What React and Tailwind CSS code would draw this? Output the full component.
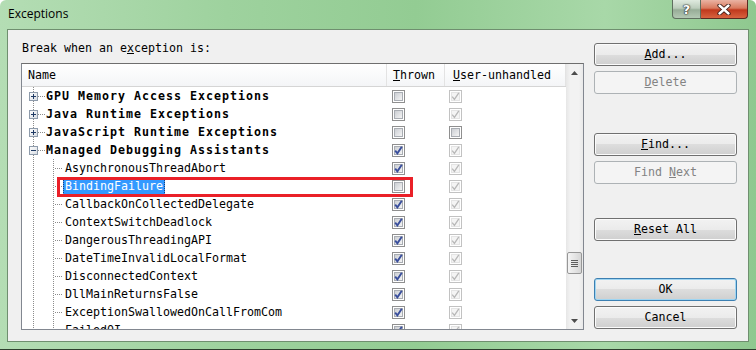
import React from "react";

const mono = "font-['DejaVu_Sans_Mono',monospace] text-[11.63px]";

const rows = [
  { name: "GPU Memory Access Exceptions", level: 0, box: "plus", thrown: "off", user: "dis" },
  { name: "Java Runtime Exceptions", level: 0, box: "plus", thrown: "off", user: "dis" },
  { name: "JavaScript Runtime Exceptions", level: 0, box: "plus", thrown: "off", user: "off" },
  { name: "Managed Debugging Assistants", level: 0, box: "minus", thrown: "on", user: "dis" },
  { name: "AsynchronousThreadAbort", level: 1, thrown: "on", user: "dis" },
  { name: "BindingFailure", level: 1, thrown: "off", user: "dis", selected: true },
  { name: "CallbackOnCollectedDelegate", level: 1, thrown: "on", user: "dis" },
  { name: "ContextSwitchDeadlock", level: 1, thrown: "on", user: "dis" },
  { name: "DangerousThreadingAPI", level: 1, thrown: "on", user: "dis" },
  { name: "DateTimeInvalidLocalFormat", level: 1, thrown: "on", user: "dis" },
  { name: "DisconnectedContext", level: 1, thrown: "on", user: "dis" },
  { name: "DllMainReturnsFalse", level: 1, thrown: "on", user: "dis" },
  { name: "ExceptionSwallowedOnCallFromCom", level: 1, thrown: "on", user: "dis" },
  { name: "FailedQI", level: 1, thrown: "on", user: "dis" },
];

function Defs() {
  return (
    <svg width="0" height="0" className="absolute">
      <defs>
        <linearGradient id="tvbox" x1="0" y1="0" x2="1" y2="1">
          <stop offset="0" stopColor="#ffffff" />
          <stop offset="1" stopColor="#d6dbe2" />
        </linearGradient>
        <linearGradient id="cbfill" x1="0" y1="0" x2="1" y2="1">
          <stop offset="0" stopColor="#c9ccd1" />
          <stop offset="1" stopColor="#f7f7f7" />
        </linearGradient>
      </defs>
    </svg>
  );
}

function Gutter({ level, box }) {
  const dot = "#8c8c8c";
  if (level === 0) {
    return (
      <svg width="24" height="18" className="shrink-0" shapeRendering="crispEdges">
        <line x1="11.5" y1="0" x2="11.5" y2="18" stroke={dot} strokeDasharray="1 1" />
        <line x1="16" y1="9.5" x2="23" y2="9.5" stroke={dot} strokeDasharray="1 1" />
        <rect x="7.5" y="5.5" width="8" height="8" fill="url(#tvbox)" stroke="#8e9bab" />
        <line x1="9" y1="9.5" x2="14" y2="9.5" stroke="#1f3a64" />
        {box === "plus" && <line x1="11.5" y1="7" x2="11.5" y2="12" stroke="#1f3a64" />}
      </svg>
    );
  }
  return (
    <svg width="43" height="18" className="shrink-0" shapeRendering="crispEdges">
      <line x1="11.5" y1="0" x2="11.5" y2="18" stroke={dot} strokeDasharray="1 1" />
      <line x1="31.5" y1="0" x2="31.5" y2="18" stroke={dot} strokeDasharray="1 1" />
      <line x1="33" y1="9.5" x2="41" y2="9.5" stroke={dot} strokeDasharray="1 1" />
    </svg>
  );
}

function Check({ state }) {
  const dis = state === "dis";
  const on = state === "on" || dis;
  return (
    <svg width="13" height="13" shapeRendering="crispEdges" className="shrink-0">
      <rect x="0.5" y="0.5" width="12" height="12" fill="#fff" stroke={dis ? "#c2c2c2" : "#8f8f8f"} />
      <rect
        x="2.5"
        y="2.5"
        width="8"
        height="8"
        fill={dis ? "#f4f4f4" : "url(#cbfill)"}
        stroke={dis ? "#e4e4e4" : "#a9adb3"}
      />
      {on && (
        <path
          d="M3.2 6.6 L5.4 9.3 L9.8 2.8"
          fill="none"
          stroke={dis ? "#b8b8b8" : "#3a4f9c"}
          strokeWidth={dis ? 1.3 : 1.9}
          shapeRendering="geometricPrecision"
        />
      )}
    </svg>
  );
}

function Button({ children, disabled, primary, className = "" }) {
  const base = "flex h-[23px] w-[143px] items-center justify-center rounded-[3px] border " + mono;
  if (disabled) {
    return (
      <div className={`${base} border-[#adb2b5] bg-[#f4f4f4] text-[#838383] ${className}`}>{children}</div>
    );
  }
  return (
    <div
      className={`${base} ${
        primary
          ? "border-[#3c7fb1] shadow-[inset_0_0_0_1px_#9fd5f2]"
          : "border-[#707070] shadow-[inset_0_0_0_1px_#fbfbfb]"
      } bg-[linear-gradient(180deg,#f2f2f2_0%,#ebebeb_50%,#dddddd_50%,#cfcfcf_100%)] text-black ${className}`}
    >
      {children}
    </div>
  );
}

function Row({ r }) {
  return (
    <div className="flex h-[18px] items-center">
      <div className="flex h-[18px] w-[365px] items-center">
        <Gutter level={r.level} box={r.box} />
        {r.selected ? (
          <span className="-ml-[2px] h-[17px] bg-[#3399ff] px-[2px] leading-[17px] text-white outline-1 outline-dotted outline-[#1a3f7a] -outline-offset-1">
            {r.name}
          </span>
        ) : (
          <span className={r.level === 0 ? "font-bold tracking-[1px] leading-[18px]" : "leading-[18px]"}>
            {r.name}
          </span>
        )}
      </div>
      <div className="flex w-[58px] pl-[5px]">
        <Check state={r.thrown} />
      </div>
      <div className="flex pl-[4px]">
        <Check state={r.user} />
      </div>
    </div>
  );
}

export default function App() {
  return (
    <div className="flex h-[350px] w-[756px] flex-col overflow-hidden rounded-t-[6px] border-b border-[#2e3f2e] bg-[linear-gradient(90deg,#b4ddb4_0%,#9ed29e_30%,#93cc93_55%,#a8d8a8_80%,#8fc88f_100%)]">
      <Defs />
      <div className="flex h-[29px] shrink-0 items-start justify-between">
        <div className="pl-[8px] pt-[6px] font-['Open_Sans',sans-serif] text-[12px] leading-[16px] text-black">
          Exceptions
        </div>
        <div className="mr-[8px] flex">
          <div className="flex h-[19px] w-[29px] items-center justify-center rounded-bl-[4px] border border-t-0 border-[#5f6f5f] bg-[linear-gradient(180deg,#dfeadf_0%,#bccdbc_45%,#97ad97_55%,#b4c8b4_100%)] font-['DejaVu_Sans',sans-serif] text-[13px] font-bold leading-none text-white [text-shadow:0_0_1px_#222,0_0_1px_#222,0_0_2px_#333]">
            ?
          </div>
          <div className="flex h-[19px] w-[47px] items-center justify-center rounded-br-[4px] border border-l-0 border-t-0 border-[#5a2a22] bg-[linear-gradient(180deg,#eab3a3_0%,#d97a5e_45%,#c0391d_55%,#d8633f_100%)]">
            <svg width="14" height="11" viewBox="0 0 14 11">
              <path d="M2.5 1.5 L11.5 9.5 M11.5 1.5 L2.5 9.5" stroke="#3a1a14" strokeWidth="4.2" strokeLinecap="round" />
              <path d="M2.5 1.5 L11.5 9.5 M11.5 1.5 L2.5 9.5" stroke="#ffffff" strokeWidth="2.4" strokeLinecap="round" />
            </svg>
          </div>
        </div>
      </div>

      <div className="flex flex-1 px-[7px] pb-[7px]">
        <div className={`flex flex-1 border border-[#6f8f6f] bg-[#f0f0f0] ${mono} text-black`}>
          <div className="flex flex-col pl-[13px]">
            <div className="mt-[11px] h-[14px] pl-[1px] leading-[14px]">
              Break when an e<u>x</u>ception is:
            </div>
            <div className="mt-[8px] flex h-[267px] w-[563px] border border-[#828790] border-t-[#6e6e6e] bg-white">
              <div className="flex w-[544px] flex-col">
                <div className="flex h-[23px] shrink-0 border-b border-[#d5d5d5] bg-[linear-gradient(180deg,#ffffff,#f4f5f7)] leading-[22px]">
                  <div className="w-[365px] border-r border-[#e3e3e3] pl-[6px]">Name</div>
                  <div className="w-[58px] border-r border-[#e3e3e3] pl-[6px]">
                    <u>T</u>hrown
                  </div>
                  <div className="flex-1 border-r border-[#e3e3e3] pl-[8px]">
                    <u>U</u>ser-unhandled
                  </div>
                </div>
                <div className="relative flex-1 overflow-hidden">
                  {rows.map((r) => (
                    <Row key={r.name} r={r} />
                  ))}
                  <div className="pointer-events-none absolute left-[35px] top-[90px] h-[20px] w-[356px] border-[3px] border-[#ea2028]" />
                </div>
              </div>
              <div className="flex w-[17px] flex-col bg-[linear-gradient(90deg,#e6e6e6,#f2f2f2_25%,#f2f2f2_75%,#e9e9e9)]">
                <div className="flex h-[17px] items-center justify-center">
                  <svg width="7" height="4" viewBox="0 0 7 4">
                    <path d="M3.5 0 L7 4 L0 4 Z" fill="#4d4d4d" />
                  </svg>
                </div>
                <div className="ml-[1px] mt-[171px] flex h-[22px] w-[15px] flex-col items-center justify-center gap-[1px] rounded-[2px] border border-[#979797] bg-[linear-gradient(90deg,#f4f4f4,#e6e6e6_50%,#d6d6d6)]">
                  <div className="h-px w-[7px] bg-[#5e5e5e]" />
                  <div className="h-px w-[7px] bg-[#5e5e5e]" />
                  <div className="h-px w-[7px] bg-[#5e5e5e]" />
                  <div className="h-px w-[7px] bg-[#5e5e5e]" />
                </div>
                <div className="mt-auto flex h-[17px] items-center justify-center">
                  <svg width="7" height="4" viewBox="0 0 7 4">
                    <path d="M0 0 L7 0 L3.5 4 Z" fill="#4d4d4d" />
                  </svg>
                </div>
              </div>
            </div>
          </div>

          <div className="ml-[10px] flex flex-col">
            <Button className="mt-[13px]">
              <span>
                <u>A</u>dd...
              </span>
            </Button>
            <Button disabled className="mt-[5px]">
              <span>
                <u>D</u>elete
              </span>
            </Button>
            <Button className="mt-[39px]">
              <span>
                <u>F</u>ind...
              </span>
            </Button>
            <Button disabled className="mt-[5px]">
              <span>
                Find <u>N</u>ext
              </span>
            </Button>
            <Button className="mt-[34px]">
              <span>
                <u>R</u>eset All
              </span>
            </Button>
            <Button primary className="mt-[37px]">
              OK
            </Button>
            <Button className="mt-[5px]">Cancel</Button>
          </div>
        </div>
      </div>
    </div>
  );
}
